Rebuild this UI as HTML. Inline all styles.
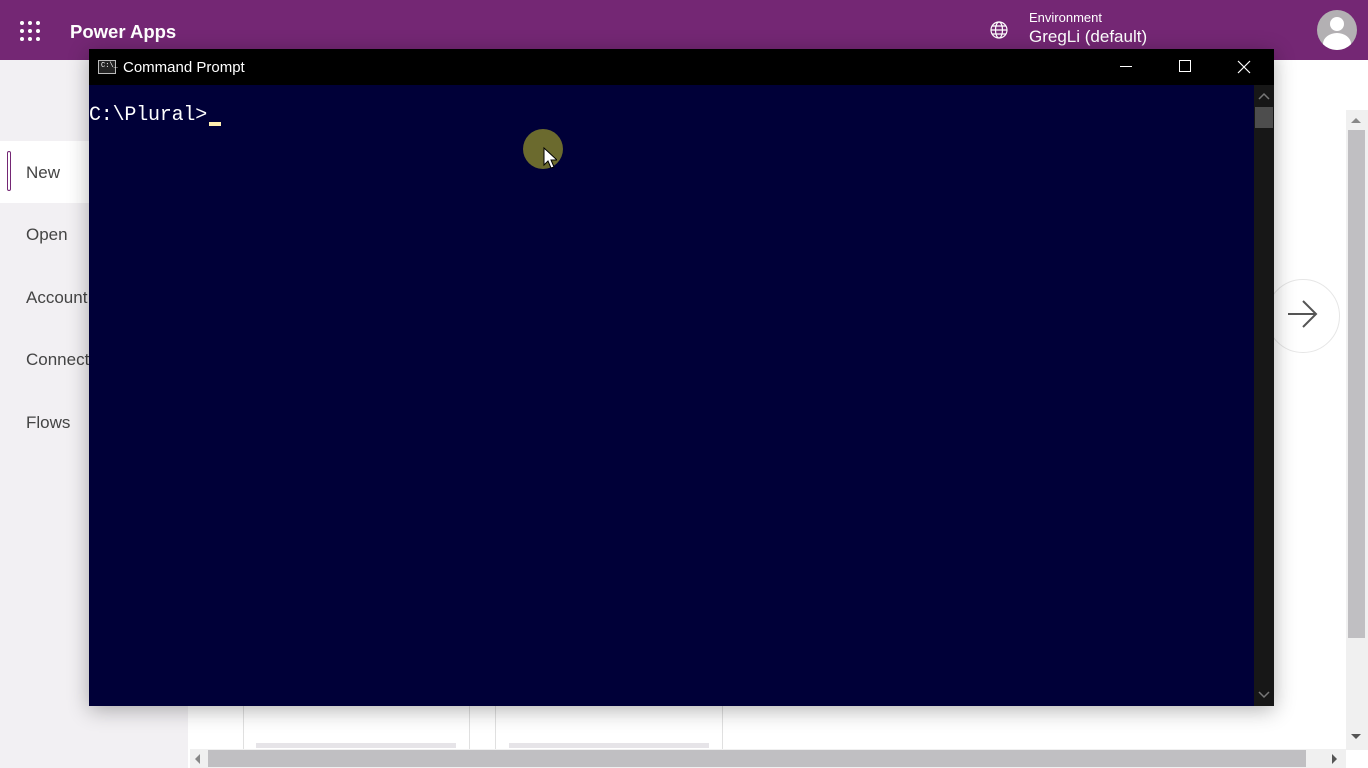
<!DOCTYPE html>
<html><head><style>
*{margin:0;padding:0;box-sizing:border-box}
body{width:1368px;height:768px;overflow:hidden;position:relative;background:#fff;font-family:"Liberation Sans",sans-serif}
.hdr{position:absolute;left:0;top:0;width:1368px;height:60px;background:#742774;color:#fff}
.side{position:absolute;left:0;top:60px;width:188px;height:708px;background:#f2f0f3}
.nav{position:absolute;left:26px;font-size:17px;color:#444}
.a{position:absolute}
</style></head><body>
<div class="hdr">
 <svg class="a" style="left:19px;top:20px" width="22" height="22" fill="#fff">
  <circle cx="3" cy="3" r="2"/><circle cx="11" cy="3" r="2"/><circle cx="19" cy="3" r="2"/>
  <circle cx="3" cy="11" r="2"/><circle cx="11" cy="11" r="2"/><circle cx="19" cy="11" r="2"/>
  <circle cx="3" cy="19" r="2"/><circle cx="11" cy="19" r="2"/><circle cx="19" cy="19" r="2"/></svg>
 <div class="a" style="left:70px;top:21px;font-size:18.5px;font-weight:bold">Power Apps</div>
 <svg class="a" style="left:989px;top:20px" width="20" height="20" fill="none" stroke="#fff" stroke-width="1.2"><circle cx="10" cy="10" r="8"/><ellipse cx="10" cy="10" rx="3.5" ry="8"/><path d="M2 10h16M3 6h14M3 14h14"/></svg>
 <div class="a" style="left:1029px;top:10px;font-size:13px">Environment</div>
 <div class="a" style="left:1029px;top:27px;font-size:17px">GregLi (default)</div>
 <div class="a" style="left:1317px;top:10px;width:40px;height:40px;border-radius:50%;background:#b3b0b3;overflow:hidden">
  <div class="a" style="left:13px;top:7px;width:14px;height:14px;border-radius:50%;background:#fff"></div>
  <div class="a" style="left:6px;top:23px;width:28px;height:22px;border-radius:50% 50% 0 0;background:#fff"></div></div>
</div>
<div class="side">
 <div class="a" style="left:0;top:81px;width:188px;height:62px;background:#fff"></div>
 <div class="a" style="left:7px;top:91px;width:4px;height:40px;border:1.5px solid #742774;border-radius:2px"></div>
 <div class="nav" style="top:103px">New</div>
 <div class="nav" style="top:165px">Open</div>
 <div class="nav" style="top:228px">Account</div>
 <div class="nav" style="top:290px">Connect</div>
 <div class="nav" style="top:353px">Flows</div>
</div>
<div class="a" style="left:243px;top:706px;width:1px;height:44px;background:#e0e0e0"></div>
<div class="a" style="left:469px;top:706px;width:1px;height:44px;background:#e0e0e0"></div>
<div class="a" style="left:495px;top:706px;width:1px;height:44px;background:#e0e0e0"></div>
<div class="a" style="left:722px;top:706px;width:1px;height:44px;background:#e0e0e0"></div>
<div class="a" style="left:256px;top:743px;width:200px;height:5px;background:#e6e4e8"></div>
<div class="a" style="left:509px;top:743px;width:200px;height:5px;background:#e6e4e8"></div>
<div class="a" style="left:1266px;top:279px;width:74px;height:74px;border-radius:50%;border:1px solid #e6e6e6;background:#fff"></div>
<svg class="a" style="left:1286px;top:300px" width="34" height="30" fill="none" stroke="#555" stroke-width="2"><path d="M2 14h28M17 1l13 13-13 13"/></svg>
<div class="a" style="left:1346px;top:110px;width:22px;height:640px;background:#f0f0f0"></div>
<div class="a" style="left:1348px;top:130px;width:17px;height:508px;background:#c0bfc2"></div>
<div class="a" style="left:1351px;top:118px;border:5px solid transparent;border-bottom-color:#888;border-top:0"></div>
<div class="a" style="left:1351px;top:734px;border:5px solid transparent;border-top-color:#555;border-bottom:0"></div>
<div class="a" style="left:190px;top:749px;width:1156px;height:19px;background:#f0f0f0"></div>
<div class="a" style="left:208px;top:750px;width:1098px;height:17px;background:#c0bfc2"></div>
<div class="a" style="left:195px;top:754px;border:5px solid transparent;border-right-color:#888;border-left:0"></div>
<div class="a" style="left:1332px;top:754px;border:5px solid transparent;border-left-color:#555;border-right:0"></div>
<div class="a" style="left:89px;top:49px;width:1185px;height:657px;background:#000038;box-shadow:0 4px 20px rgba(0,0,0,.3)">
 <div class="a" style="left:0;top:0;width:1185px;height:36px;background:#000"></div>
 <div class="a" style="left:9px;top:11px;width:18px;height:14px;border:1px solid #bbb;background:#222;font:7px 'Liberation Mono';color:#fff;padding-left:2px;line-height:11px">C:\_</div>
 <div class="a" style="left:34px;top:10px;font-size:15px;color:#fff">Command Prompt</div>
 <div class="a" style="left:1031px;top:17px;width:12px;height:1px;background:#fff"></div>
 <div class="a" style="left:1090px;top:11px;width:12px;height:12px;border:1px solid #fff"></div>
 <svg class="a" style="left:1148px;top:11px" width="14" height="14" stroke="#fff" stroke-width="1.2"><path d="M1 1l12 12M13 1L1 13"/></svg>
 <div class="a" style="left:1165px;top:36px;width:20px;height:621px;background:#171717"></div>
 <div class="a" style="left:1166px;top:58px;width:18px;height:21px;background:#4d4d4d"></div>
 <svg class="a" style="left:1169px;top:43px" width="12" height="8" fill="none" stroke="#777" stroke-width="1.5"><path d="M1 7l5-5 5 5"/></svg>
 <svg class="a" style="left:1169px;top:642px" width="12" height="8" fill="none" stroke="#777" stroke-width="1.5"><path d="M1 1l5 5 5-5"/></svg>
 <div class="a" style="left:0;top:55px;font:20px 'Liberation Mono',monospace;color:#fff;letter-spacing:-.2px">C:\Plural&gt;</div>
 <div class="a" style="left:120px;top:73px;width:12px;height:4px;background:#ffeeb0"></div>
 <div class="a" style="left:434px;top:80px;width:40px;height:40px;border-radius:50%;background:#6b6a2e"></div>
 <svg class="a" style="left:454px;top:98px" width="14" height="22"><path d="M1 1v17l4-4 3 7 3-1-3-7h6z" fill="#fff" stroke="#000"/></svg>
</div>
</body></html>
